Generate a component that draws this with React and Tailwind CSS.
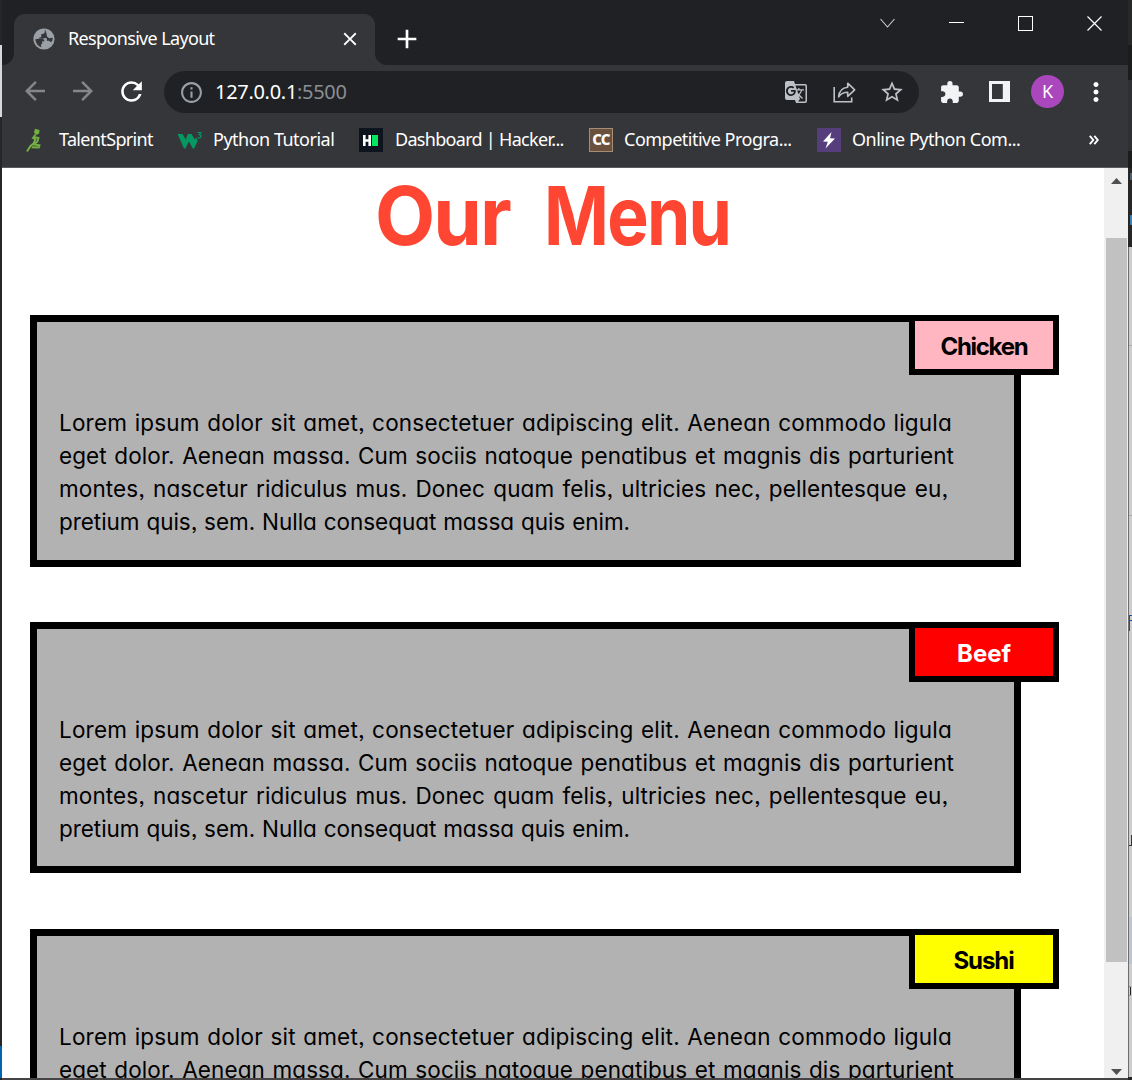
import React from "react";
import {
  MdArrowBack,
  MdArrowForward,
  MdRefresh,
  MdInfoOutline,
  MdGTranslate,
  MdStarBorder,
  MdExtension,
  MdMoreVert,
  MdClose,
  MdAdd,
} from "react-icons/md";

const LINES = [
  { text: "Lorem ipsum dolor sit amet, consectetuer adipiscing elit. Aenean commodo ligula", cls: "w-[893px] tracking-[0.2px]" },
  { text: "eget dolor. Aenean massa. Cum sociis natoque penatibus et magnis dis parturient", cls: "w-[895px] tracking-[0.1px]" },
  { text: "montes, nascetur ridiculus mus. Donec quam felis, ultricies nec, pellentesque eu,", cls: "w-[889px] tracking-[0.1px]" },
  { text: "pretium quis, sem. Nulla consequat massa quis enim.", cls: "w-[571px] tracking-[-0.05px]" },
];

const CARDS = [
  { name: "Chicken", cls: "bg-[#ffb6c1] text-black", word: "w-[87px] tracking-[-1.3px]" },
  { name: "Beef", cls: "bg-[#ff0000] text-white", word: "w-[54px]" },
  { name: "Sushi", cls: "bg-[#ffff00] text-black", word: "w-[61px] tracking-[-1.1px]" },
];

function Globe() {
  return (
    <svg className="ml-[19px] h-[22px] w-[22px] shrink-0" viewBox="0 0 22 22">
      <circle cx="11" cy="11" r="10.6" fill="#9aa0a6" />
      <path
        d="M2.300 10h5.500c2.300 0 3.400 1 3.400 3.200H8.600v2.600H7.200v3.100C4.200 17.300 2.100 14.200 2.300 10ZM12.800 2.600v1.200c0 1.300-.9 2-2.100 2H8.800v2.100c0 .6-.4 1-1 1H6.500v1.400h6.300c.6 0 1 .4 1 1v2h1c.9 0 1.700.6 1.900 1.400 1.700 1.200 3-1.500 3-3.700h-3.500l-2-2V6.500c0-1.500-.6-2-.4-3.900Z"
        fill="#35363a"
        transform="rotate(-8 11 11)"
      />
    </svg>
  );
}

function Runner() {
  return (
    <svg className="h-6 w-6" viewBox="0 0 24 24" fill="none" stroke="#72b043" strokeWidth="1.900">
      <path d="m13 .8 4.500 1.200-.3 3.500-3 1.500-2.200-2.500Z" fill="#72b043" stroke="none" />
      <path d="M13.500 6.500 11 10l2.500 1.500-2 4-3 2.500-3.500 5.500M12 9l4.500 1-1 3.500-3.500 3 5.500.8-.8 2.200-7-.3" />
    </svg>
  );
}

function W3() {
  return (
    <svg className="h-6 w-6" viewBox="0 0 24 24">
      <path d="M-.5 6h5l3.300 5.500L9.800 6h3.800l3 5.500 1.200-2 2 3-3.600 8h-1.500l-3.700-7-3.600 7H6Z" fill="#059862" />
      <path d="M19.500 4.500h3.400l-1.700 2.200c3.200.2 2 4-1.700 2.900" fill="none" stroke="#059862" strokeWidth="1.200" />
    </svg>
  );
}

function Share() {
  return (
    <svg className="h-6 w-6" viewBox="0 0 24 24" fill="none" stroke="#bdc1c6" strokeWidth="1.600">
      <path d="M2.200 7v14.700h17.500V17.500" />
      <path d="M6.700 16.800c.5-5.800 3-9 9-9.500V3.200l7 6.600-7 6.500v-4c-4.400 0-6.500 1-9 4.500Z" strokeLinejoin="round" />
    </svg>
  );
}

function Bookmark({ icon, label, box, track }) {
  return (
    <div className={"flex h-8 shrink-0 items-center " + box}>
      <div className="h-6 w-6 shrink-0">{icon}</div>
      <span className={"-mt-px whitespace-nowrap text-[18px] " + track}>{label}</span>
    </div>
  );
}

function TitleBar() {
  return (
    <div className="flex h-[65px] bg-[#202124]">
      <div className="flex w-3 items-end bg-[#202124]">
        <div className="h-3 w-3 bg-[#35363a]">
          <div className="h-3 w-3 rounded-br-xl bg-[#202124]" />
        </div>
      </div>
      <div className="mt-[14px] flex w-[361px] items-center rounded-t-[11px] bg-[#35363a] pb-px">
        <Globe />
        <span className="-mt-[2px] ml-[13px] whitespace-nowrap text-[18px] tracking-[-0.65px]">Responsive Layout</span>
        <MdClose className="mr-[14px] ml-auto" size={22} />
      </div>
      <div className="flex w-3 items-end">
        <div className="h-3 w-3 bg-[#35363a]">
          <div className="h-3 w-3 rounded-bl-xl bg-[#202124]" />
        </div>
      </div>
      <MdAdd className="mt-[23px] ml-1" size={32} />
      <svg className="mt-[14px] ml-auto h-[18px] w-[18px]" viewBox="0 0 18 18" fill="none" stroke="#cfcfcf" strokeWidth="1.100">
        <path d="m1.500 5 7 8 7-8" />
      </svg>
      <div className="mt-[22px] ml-[52px] h-px w-[15px] bg-white" />
      <div className="mt-4 ml-[54px] h-[15px] w-[15px] border border-white" />
      <svg className="mt-4 mr-[26px] ml-[54px] h-[15px] w-[15px]" viewBox="0 0 15 15" fill="none" stroke="#fff" strokeWidth="1.200">
        <path d="m.5.5 14 14M14.500.5l-14 14" />
      </svg>
    </div>
  );
}

function Toolbar() {
  return (
    <div className="flex h-[54px] items-center">
      <MdArrowBack className="-mt-[2px] ml-[18px] text-[#85868a]" size={30} />
      <MdArrowForward className="-mt-[2px] ml-[18px] text-[#85868a]" size={30} />
      <MdRefresh className="-mt-px ml-[18px]" size={31} />
      <div className="ml-[17px] flex h-[42px] w-[755px] items-center rounded-full bg-[#202124]">
        <MdInfoOutline className="ml-[15px] text-[#9aa0a6]" size={25} />
        <span className="ml-[11px] text-[20px] tracking-[-0.3px]">
          127.0.0.1<span className="text-[#8b8e93]">:5500</span>
        </span>
        <MdGTranslate className="ml-auto text-[#bdc1c6]" size={24} />
        <div className="ml-[24px]">
          <Share />
        </div>
        <MdStarBorder className="mr-[14px] ml-[23px] text-[#bdc1c6]" size={26} />
      </div>
      <MdExtension className="ml-[20px] text-[#f1f3f4]" size={25} />
      <div className="-mt-px ml-[25px] flex h-[21px] w-[21px] justify-end border-[3px] border-[#f1f3f4]">
        <div className="w-[5px] border-l border-[#5b5c60] bg-[#f1f3f4]" />
      </div>
      <div className="-mt-px ml-[21px] flex h-[33px] w-[33px] items-center justify-center rounded-full bg-[#ab47bc] text-[18px]">K</div>
      <MdMoreVert className="-mt-px ml-[17px]" size={30} />
    </div>
  );
}

function Bookmarks() {
  return (
    <div className="flex h-[49px] items-start border-b border-[#5b5a5e] pt-[5px] pl-5">
      <Bookmark icon={<Runner />} label="TalentSprint" box="w-[156px]" track="ml-[13px] tracking-[-0.65px]" />
      <Bookmark icon={<W3 />} label="Python Tutorial" box="w-[181px]" track="ml-[11px] tracking-[-0.5px]" />
      <Bookmark
        icon={
          <div className="flex h-6 w-6 items-center gap-px bg-[#0e141e] pl-1">
            <svg className="h-[11px] w-[8px]" viewBox="0 0 8 11" fill="none" stroke="#fff" strokeWidth="2.600">
              <path d="M1.300 0v11M6.700 0v11M1 5.500h6" />
            </svg>
            <div className="h-[11px] w-[6px] bg-[#05e660]" />
          </div>
        }
        label="Dashboard | Hacker..."
        box="w-[230px]"
        track="ml-[12px] tracking-[-0.7px]"
      />
      <Bookmark
        icon={
          <div className="flex h-6 w-6 items-center justify-center border border-[#a58d79] bg-[#6b503d] pb-[2px] text-[15px] font-extrabold tracking-[-0.8px]">
            CC
          </div>
        }
        label="Competitive Progra..."
        box="w-[228px]"
        track="ml-[11px] tracking-[-0.5px]"
      />
      <Bookmark
        icon={
          <svg className="h-6 w-6 bg-[#563d7c]" viewBox="0 0 24 24">
            <path d="m14.500 4-8.500 9.500 4.800.2L8.500 20.500 18 10.500l-5-.2Z" fill="#fff" />
          </svg>
        }
        label="Online Python Com..."
        box="w-[230px]"
        track="ml-[11px] tracking-[-0.5px]"
      />
      <svg className="mt-[11px] mr-[29px] ml-auto h-[10px] w-[10px]" viewBox="0 0 10 10" fill="none" stroke="#fff" strokeWidth="1.900">
        <path d="m.8.8 3.500 4.200L.8 9.200M5.300.8 8.800 5 5.300 9.200" />
      </svg>
    </div>
  );
}

function MenuCard({ name, cls, word }) {
  return (
    <div className="relative h-[251.4px] w-[991px] shrink-0 border-[7px] border-black bg-[#b2b2b2] pt-[84px] pl-[22px]">
      <div className={"absolute top-[-7px] right-[-45px] flex h-[60px] w-[150px] items-center justify-center border-[6px] border-black pt-[4px] " + cls}>
        <span className={"text-[24px] leading-[34px] font-bold whitespace-nowrap " + word}>{name}</span>
      </div>
      {LINES.map((line) => (
        <div key={line.text} className={"h-[33px] text-[22.5px] leading-[33px] whitespace-nowrap [text-align-last:justify] " + line.cls}>
          {line.text}
        </div>
      ))}
    </div>
  );
}

function Page() {
  return (
    <div className="flex min-h-0 flex-1 bg-white text-black">
      <div className="flex w-[1102px] flex-col overflow-hidden pl-7 font-['Inter','Open_Sans',sans-serif] [font-feature-settings:'cv11','ss03']">
        <h1 className="flex h-[147.2px] shrink-0 pl-[345px] text-[81px] leading-[97px] font-bold text-[#ff4632]">
          <span className="w-[169px] origin-left scale-x-[0.965] tracking-[-2px]">Our</span>
          <span className="origin-left scale-x-[0.86] tracking-[-2px]">Menu</span>
        </h1>
        <div className="flex flex-col gap-[55.3px]">
          {CARDS.map((card) => (
            <MenuCard key={card.name} {...card} />
          ))}
        </div>
      </div>
      <div className="flex w-[24px] flex-col items-center bg-[#f0f0f0]">
        <svg className="mt-[10px] h-[6px] w-[11px] shrink-0" viewBox="0 0 11 6">
          <path d="M0 6 5.500 0 11 6Z" fill="#505050" />
        </svg>
        <div className="mt-[54px] h-[724px] w-[21px] shrink-0 bg-[#c1c1c1]" />
        <svg className="mt-auto mb-[3px] h-[6px] w-[11px] shrink-0" viewBox="0 0 11 6">
          <path d="M0 0h11L5.500 6Z" fill="#505050" />
        </svg>
      </div>
    </div>
  );
}

function LeftEdge() {
  return (
    <div className="flex w-[2px] flex-col bg-[#262626]">
      <div className="mt-[45px] h-[72px] bg-[#d8d8d8]" />
      <div className="mt-auto mb-[2px] h-[32px] bg-[#0066b4]" />
    </div>
  );
}

function RightEdge() {
  return (
    <div className="flex w-[4px] flex-col overflow-hidden bg-[#262626]">
      <div className="h-[45px] bg-[#282828]" />
      <div className="h-[35px] bg-[#1c1c1c]" />
      <div className="h-[71px] bg-[#2e3031]" />
      <div className="h-[17px] bg-[#1c1c1c]" />
      <div className="h-[5px]" />
      <div className="h-[7px] w-[2px] self-end bg-[#4d5c69]" />
      <div className="h-[35px]" />
      <div className="h-[10px] w-[2px] self-end bg-[#3b7fae]" />
      <div className="h-[22px]" />
      <div className="flex h-[830px] flex-col border-l border-[#6d6d6d] bg-[#cccdcd]">
        <div className="mt-[98px] h-px bg-[#aaaaaa]" />
        <div className="mt-[169px] h-px bg-[#aaaaaa]" />
        <div className="mt-[99px] h-[16px] w-px bg-[#1855a4]" />
        <div className="mt-[-16px] h-px bg-[#1855a4]" />
        <div className="mt-[4px] h-px bg-[#1855a4]" />
        <div className="mt-[214px] h-[10px] w-px self-end bg-[#333333]" />
        <div className="h-px bg-[#333333]" />
        <div className="mt-[71px] h-[47px] bg-[#bfc4d1]" />
        <div className="mt-[22px] h-[10px] w-[2px] rounded-r-full border-r border-[#222222]" />
      </div>
    </div>
  );
}

export default function App() {
  return (
    <div className="flex h-[1080px] w-[1132px] overflow-hidden font-['Noto_Sans','Open_Sans',sans-serif] text-white">
      <LeftEdge />
      <div className="flex w-[1126px] flex-col bg-[#35363a]">
        <TitleBar />
        <Toolbar />
        <Bookmarks />
        <Page />
        <div className="h-[2px] shrink-0 bg-[#454343]" />
      </div>
      <RightEdge />
    </div>
  );
}
